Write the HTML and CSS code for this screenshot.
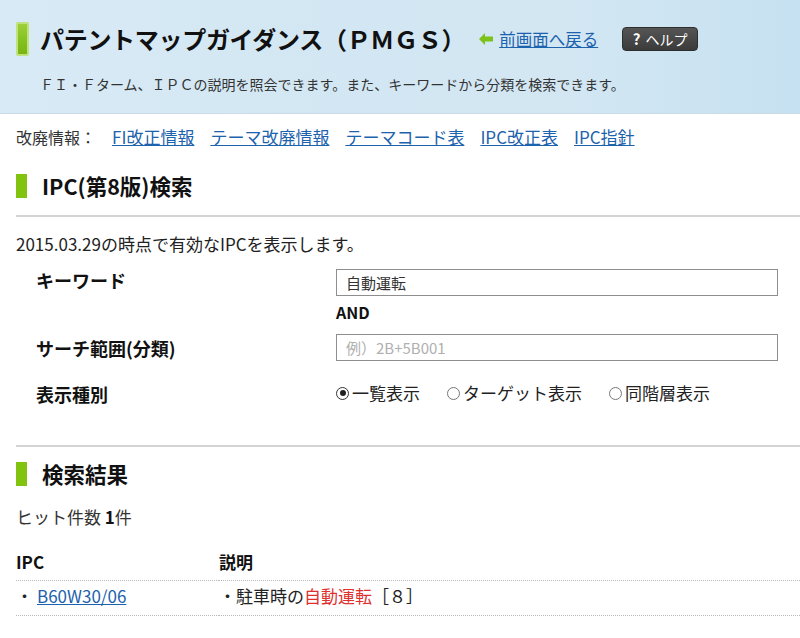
FILE: index.html
```html
<!DOCTYPE html>
<html lang="ja">
<head>
<meta charset="utf-8">
<title>パテントマップガイダンス（ＰＭＧＳ）</title>
<link rel="stylesheet" href="styles.css">
</head>
<body>
<header class="hero">
  <div class="hero-top">
    <span class="logo-bar"></span>
    <h1 class="hero-title">パテントマップガイダンス（ＰＭＧＳ）</h1>
    <a class="back-link" href="#"><svg class="back-arrow" width="14" height="12" viewBox="0 0 14 12"><polygon points="0,6 6,0 6,3.5 14,3.5 14,8.5 6,8.5 6,12" fill="#7cc21a"/></svg><span class="back-text">前画面へ戻る</span></a>
    <a class="help-btn" href="#"><b class="help-q">?</b> ヘルプ</a>
  </div>
  <p class="hero-lead">ＦＩ・Ｆターム、ＩＰＣの説明を照会できます。また、キーワードから分類を検索できます。</p>
</header>

<main class="page">
  <nav class="info-links">
    <span class="info-label">改廃情報：</span>
    <a href="#">FI改正情報</a>
    <a href="#">テーマ改廃情報</a>
    <a href="#">テーマコード表</a>
    <a href="#">IPC改正表</a>
    <a href="#">IPC指針</a>
  </nav>

  <h2 class="sec-title">IPC(第8版)検索</h2>
  <hr class="sec-rule">
  <p class="note">2015.03.29の時点で有効なIPCを表示します。</p>

  <div class="form">
    <div class="form-row row-kw">
      <span class="form-label">キーワード</span>
      <input class="text-input" type="text" value="自動運転">
    </div>
    <div class="and-row">AND</div>
    <div class="form-row row-range">
      <span class="form-label">サーチ範囲(分類)</span>
      <input class="text-input" type="text" placeholder="例）2B+5B001">
    </div>
    <div class="form-row row-type">
      <span class="form-label">表示種別</span>
      <div class="radios">
        <label class="radio"><span class="radio-mark checked"></span>一覧表示</label>
        <label class="radio"><span class="radio-mark"></span>ターゲット表示</label>
        <label class="radio"><span class="radio-mark"></span>同階層表示</label>
      </div>
    </div>
  </div>

  <hr class="sec-rule rule-2">

  <h2 class="sec-title title-2">検索結果</h2>
  <p class="hits">ヒット件数 <b>1</b>件</p>

  <table class="results">
    <thead>
      <tr><th class="col-ipc">IPC</th><th class="col-desc">説明</th></tr>
    </thead>
    <tbody>
      <tr>
        <td class="col-ipc"><span class="dot">・</span><a href="#">B60W30/06</a></td>
        <td class="col-desc">・駐車時の<span class="hl">自動運転</span>［８］</td>
      </tr>
    </tbody>
  </table>
</main>
</body>
</html>
```

FILE: styles.css
```css
* { box-sizing: border-box; }

html, body {
  margin: 0;
  padding: 0;
  background: #fff;
}

body {
  font-family: "Noto Sans CJK JP", "Noto Sans", sans-serif;
  color: #222;
  font-size: 17px;
}

a { color: #1d62ad; text-decoration: underline; }

/* ---------- header ---------- */
.hero {
  height: 114px;
  background: linear-gradient(90deg, #d8eaf5 0%, #d2e7f3 45%, #d3e7f3 70%, #c6e1f1 100%);
  border-bottom: 1px solid #c9dbe6;
  padding: 22px 0 0 16px;
}

.hero-top {
  display: flex;
  align-items: center;
  height: 34px;
}

.logo-bar {
  width: 13px;
  height: 34px;
  border: 2px solid #bfe27a;
  border-radius: 2px;
  background: linear-gradient(180deg, #9fd03a 0%, #86c221 50%, #78b514 100%);
  margin-right: 11px;
  flex: none;
}

.hero-title {
  margin: 0;
  font-size: 24px;
  font-weight: bold;
  line-height: 34px;
  color: #111;
  letter-spacing: -0.3px;
}

.back-link {
  display: flex;
  align-items: center;
  margin-left: 14px;
  font-size: 16.5px;
  line-height: 22px;
  text-decoration: none;
}

.back-arrow { margin-right: 6px; flex: none; }

.back-text {
  text-decoration: underline;
  color: #1d62ad;
}

.help-btn {
  margin-left: 24px;
  width: 76px;
  height: 24px;
  border-radius: 4px;
  background: linear-gradient(180deg, #555 0%, #3b3b3b 100%);
  border: 1px solid #2e2e2e;
  color: #fff;
  text-decoration: none;
  font-size: 14px;
  line-height: 22px;
  text-align: center;
}

.help-q { font-weight: bold; margin-right: 2px; font-size: 15px; }

.hero-lead {
  margin: 18px 0 0 24px;
  font-size: 14px;
  line-height: 20px;
  color: #333;
}

/* ---------- main ---------- */
.page {
  padding-left: 16px;
}

.info-links {
  display: flex;
  gap: 16px;
  margin-top: 11px;
  line-height: 24px;
  font-size: 17px;
  color: #333;
}

.info-label { font-size: 16px; }

.sec-title {
  position: relative;
  margin: 25px 0 0;
  padding-left: 26px;
  font-size: 21.5px;
  font-weight: bold;
  line-height: 24px;
  color: #111;
}

.sec-title::before {
  content: "";
  position: absolute;
  left: 0;
  top: 0;
  width: 11px;
  height: 24px;
  background: #82c30f;
}

.sec-rule {
  margin: 17px 0 0;
  border: 0;
  height: 2px;
  background: #d4d4d4;
}

.note {
  margin: 15px 0 0;
  line-height: 24px;
  font-size: 17px;
  color: #222;
}

.form { padding-left: 20px; }

.form-row {
  display: flex;
  align-items: center;
}

.form-label {
  width: 300px;
  flex: none;
  font-size: 18px;
  font-weight: bold;
  line-height: 24px;
  color: #111;
}

.row-kw { margin-top: 13px; }
.row-kw .form-label { margin-top: -5px; }

.text-input {
  width: 442px;
  height: 27px;
  border: 1px solid #8e8e8e;
  padding: 0 9px;
  font-family: "Noto Sans CJK JP", sans-serif;
  font-size: 15px;
  color: #333;
  background: #fff;
  outline: none;
}

.text-input::placeholder { color: #b0b0b0; }

.and-row {
  margin-top: 4px;
  padding-left: 300px;
  font-size: 16px;
  font-weight: bold;
  line-height: 24px;
  color: #111;
}

.row-range { margin-top: 10px; }

.row-type { margin-top: 19px; }
.row-type .form-label { margin-top: 2px; }

.radios {
  display: flex;
  gap: 27px;
  font-size: 17px;
  line-height: 24px;
  color: #222;
}

.radio {
  display: flex;
  align-items: center;
}

.radio-mark {
  width: 13px;
  height: 13px;
  border: 1px solid #777;
  border-radius: 50%;
  margin-right: 3px;
  position: relative;
  background: #fff;
}

.radio-mark.checked { border-color: #333; }

.radio-mark.checked::after {
  content: "";
  position: absolute;
  left: 2.5px;
  top: 2.5px;
  width: 6px;
  height: 6px;
  border-radius: 50%;
  background: #222;
}

.rule-2 { margin-top: 39px; }

.title-2 { margin-top: 15px; }

.hits {
  margin: 19px 0 0;
  line-height: 24px;
  font-size: 17px;
  color: #333;
}

.hits b { color: #111; }

.results {
  margin-top: 21px;
  width: 100%;
  border-collapse: collapse;
  font-size: 17px;
}

.results th {
  text-align: left;
  font-weight: bold;
  line-height: 24px;
  padding: 0 0 6px;
  border-bottom: 1px dotted #b8b8b8;
  color: #111;
}

.results td {
  line-height: 24px;
  padding: 3px 0 7px;
  border-bottom: 1px dotted #b8b8b8;
  color: #222;
}

.col-ipc { width: 203px; }

.dot { margin-right: 4px; }

.hl { color: #df3030; }
```
